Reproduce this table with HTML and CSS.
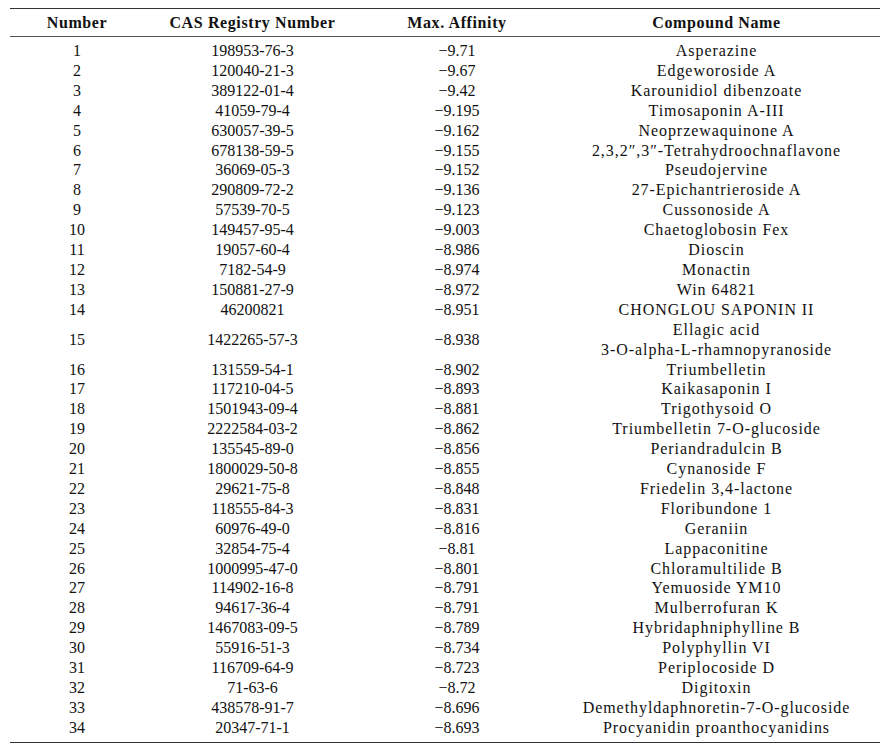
FILE: index.html
```html
<!DOCTYPE html>
<html>
<head>
<meta charset="utf-8">
<link rel="stylesheet" href="styles.css">
</head>
<body>
<table class="data">
<colgroup><col class="c1"><col class="c2"><col class="c3"><col class="c4"></colgroup>
<thead>
<tr><th>Number</th><th>CAS Registry Number</th><th>Max. Affinity</th><th>Compound Name</th></tr>
</thead>
<tbody>
<tr class="first"><td>1</td><td>198953-76-3</td><td>−9.71</td><td>Asperazine</td></tr>
<tr><td>2</td><td>120040-21-3</td><td>−9.67</td><td>Edgeworoside A</td></tr>
<tr><td>3</td><td>389122-01-4</td><td>−9.42</td><td>Karounidiol dibenzoate</td></tr>
<tr><td>4</td><td>41059-79-4</td><td>−9.195</td><td>Timosaponin A-III</td></tr>
<tr><td>5</td><td>630057-39-5</td><td>−9.162</td><td>Neoprzewaquinone A</td></tr>
<tr><td>6</td><td>678138-59-5</td><td>−9.155</td><td>2,3,2″,3″-Tetrahydroochnaflavone</td></tr>
<tr><td>7</td><td>36069-05-3</td><td>−9.152</td><td>Pseudojervine</td></tr>
<tr><td>8</td><td>290809-72-2</td><td>−9.136</td><td>27-Epichantrieroside A</td></tr>
<tr><td>9</td><td>57539-70-5</td><td>−9.123</td><td>Cussonoside A</td></tr>
<tr><td>10</td><td>149457-95-4</td><td>−9.003</td><td>Chaetoglobosin Fex</td></tr>
<tr><td>11</td><td>19057-60-4</td><td>−8.986</td><td>Dioscin</td></tr>
<tr><td>12</td><td>7182-54-9</td><td>−8.974</td><td>Monactin</td></tr>
<tr><td>13</td><td>150881-27-9</td><td>−8.972</td><td>Win 64821</td></tr>
<tr><td>14</td><td>46200821</td><td>−8.951</td><td>CHONGLOU SAPONIN II</td></tr>
<tr><td>15</td><td>1422265-57-3</td><td>−8.938</td><td>Ellagic acid<br>3-O-alpha-L-rhamnopyranoside</td></tr>
<tr><td>16</td><td>131559-54-1</td><td>−8.902</td><td>Triumbelletin</td></tr>
<tr><td>17</td><td>117210-04-5</td><td>−8.893</td><td>Kaikasaponin I</td></tr>
<tr><td>18</td><td>1501943-09-4</td><td>−8.881</td><td>Trigothysoid O</td></tr>
<tr><td>19</td><td>2222584-03-2</td><td>−8.862</td><td>Triumbelletin 7-O-glucoside</td></tr>
<tr><td>20</td><td>135545-89-0</td><td>−8.856</td><td>Periandradulcin B</td></tr>
<tr><td>21</td><td>1800029-50-8</td><td>−8.855</td><td>Cynanoside F</td></tr>
<tr><td>22</td><td>29621-75-8</td><td>−8.848</td><td>Friedelin 3,4-lactone</td></tr>
<tr><td>23</td><td>118555-84-3</td><td>−8.831</td><td>Floribundone 1</td></tr>
<tr><td>24</td><td>60976-49-0</td><td>−8.816</td><td>Geraniin</td></tr>
<tr><td>25</td><td>32854-75-4</td><td>−8.81</td><td>Lappaconitine</td></tr>
<tr><td>26</td><td>1000995-47-0</td><td>−8.801</td><td>Chloramultilide B</td></tr>
<tr><td>27</td><td>114902-16-8</td><td>−8.791</td><td>Yemuoside YM10</td></tr>
<tr><td>28</td><td>94617-36-4</td><td>−8.791</td><td>Mulberrofuran K</td></tr>
<tr><td>29</td><td>1467083-09-5</td><td>−8.789</td><td>Hybridaphniphylline B</td></tr>
<tr><td>30</td><td>55916-51-3</td><td>−8.734</td><td>Polyphyllin VI</td></tr>
<tr><td>31</td><td>116709-64-9</td><td>−8.723</td><td>Periplocoside D</td></tr>
<tr><td>32</td><td>71-63-6</td><td>−8.72</td><td>Digitoxin</td></tr>
<tr><td>33</td><td>438578-91-7</td><td>−8.696</td><td>Demethyldaphnoretin-7-O-glucoside</td></tr>
<tr class="last"><td>34</td><td>20347-71-1</td><td>−8.693</td><td>Procyanidin proanthocyanidins</td></tr>
</tbody>
</table>
</body>
</html>
```
FILE: styles.css
```css
html, body {
  margin: 0;
  padding: 0;
  background: #ffffff;
}

.data {
  margin: 8px 0 0 10px;
  width: 870px;
  table-layout: fixed;
  border-collapse: collapse;
  font-family: "Liberation Serif", "Times New Roman", serif;
  font-size: 16px;
  color: #111111;
}

.c1 { width: 134px; }
.c2 { width: 217px; }
.c3 { width: 192px; }
.c4 { width: 327px; }

.data th {
  font-weight: bold;
  text-align: center;
  line-height: 20px;
  letter-spacing: 0.6px;
  padding: 4px 0 3px;
  border-top: 1.5px solid #333333;
  border-bottom: 1px solid #555555;
}

.data td {
  text-align: center;
  vertical-align: middle;
  line-height: 19.9px;
  padding: 0;
  white-space: nowrap;
}

.data td:nth-child(4) {
  letter-spacing: 0.95px;
}

.data tr.first td {
  padding-top: 4px;
}

.data tr.last td {
  padding-bottom: 4px;
  border-bottom: 1.5px solid #333333;
}
```
